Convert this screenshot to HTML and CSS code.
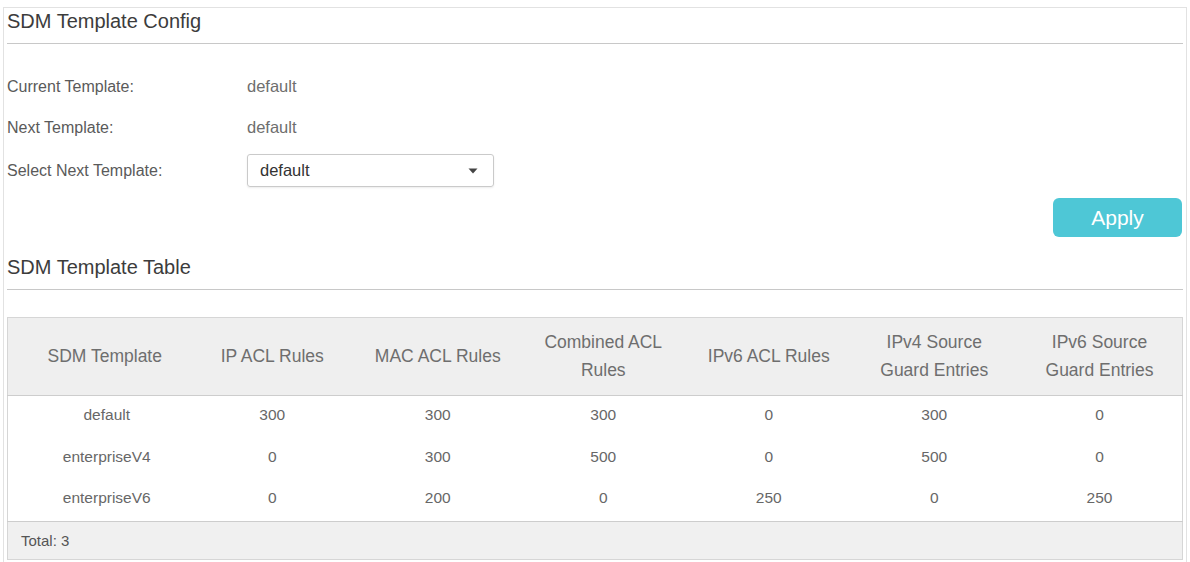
FILE: index.html
```html
<!DOCTYPE html>
<html lang="en">
<head>
    <meta charset="UTF-8">
    <meta name="viewport" content="width=device-width, initial-scale=1.0">
    <title>SDM Template Config</title>
    <link rel="stylesheet" href="styles.css">
</head>
<body>
    <div class="panel">
        <h2 class="section-title">SDM Template Config</h2>

        <div class="form">
            <div class="form-row">
                <span class="form-label">Current Template:</span>
                <span class="form-value">default</span>
            </div>
            <div class="form-row">
                <span class="form-label">Next Template:</span>
                <span class="form-value">default</span>
            </div>
            <div class="form-row form-row-select">
                <span class="form-label">Select Next Template:</span>
                <div class="select-box">
                    <span>default</span>
                    <svg class="select-arrow" width="10" height="6" viewBox="0 0 10 6">
                        <path d="M0.5 0.5 L9.5 0.5 L5 5.5 Z" fill="#444"/>
                    </svg>
                </div>
            </div>
        </div>

        <div class="apply-bar">
            <button class="btn-apply">Apply</button>
        </div>

        <h2 class="section-title section-title-table">SDM Template Table</h2>

        <table class="sdm-table">
            <colgroup>
                <col class="col-first">
                <col><col><col><col><col><col>
            </colgroup>
            <thead>
                <tr>
                    <th>SDM Template</th>
                    <th>IP ACL Rules</th>
                    <th>MAC ACL Rules</th>
                    <th>Combined ACL<br>Rules</th>
                    <th>IPv6 ACL Rules</th>
                    <th>IPv4 Source<br>Guard Entries</th>
                    <th>IPv6 Source<br>Guard Entries</th>
                </tr>
            </thead>
            <tbody>
                <tr>
                    <td>default</td><td>300</td><td>300</td><td>300</td><td>0</td><td>300</td><td>0</td>
                </tr>
                <tr>
                    <td>enterpriseV4</td><td>0</td><td>300</td><td>500</td><td>0</td><td>500</td><td>0</td>
                </tr>
                <tr>
                    <td>enterpriseV6</td><td>0</td><td>200</td><td>0</td><td>250</td><td>0</td><td>250</td>
                </tr>
            </tbody>
            <tfoot>
                <tr>
                    <td colspan="7">Total: 3</td>
                </tr>
            </tfoot>
        </table>
    </div>
</body>
</html>
```

FILE: styles.css
```css
* {
    box-sizing: border-box;
    margin: 0;
    padding: 0;
}

body {
    font-family: "Liberation Sans", Arial, sans-serif;
    background-color: #fff;
    color: #555;
}

.panel {
    width: 1184px;
    margin: 7px 0 0 3px;
    padding: 0 3px 20px 3px;
    border: 1px solid #e2e2e2;
}

.section-title {
    font-size: 20px;
    font-weight: normal;
    line-height: 26px;
    color: #3c3c3c;
    padding-bottom: 9px;
    border-bottom: 1px solid #c8c8c8;
}

.section-title-table {
    margin-top: 17px;
}

.form {
    padding-top: 22px;
}

.form-row {
    display: flex;
    align-items: center;
    height: 41px;
    font-size: 16px;
}

.form-row-select {
    height: 45px;
}

.form-label {
    width: 240px;
    color: #5a5a5a;
}

.form-value {
    font-size: 16.5px;
    color: #6e6e6e;
}

.select-box {
    width: 247px;
    height: 33px;
    display: flex;
    align-items: center;
    justify-content: space-between;
    padding: 0 15px 0 12px;
    border: 1px solid #cacaca;
    border-radius: 3px;
    box-shadow: 0 1px 2px rgba(0,0,0,0.08);
    font-size: 16.5px;
    color: #333;
}

.apply-bar {
    display: flex;
    justify-content: flex-end;
    margin-top: 5px;
    padding-right: 1px;
}

.btn-apply {
    width: 129px;
    height: 39px;
    border: none;
    border-radius: 6px;
    background-color: #4ec7d6;
    color: #fff;
    font-family: inherit;
    font-size: 21px;
    cursor: pointer;
}

.sdm-table {
    width: 100%;
    margin-top: 27px;
    border-collapse: collapse;
    table-layout: fixed;
    border: 1px solid #d6d6d6;
}

.col-first {
    width: 182px;
}

.sdm-table th {
    font-size: 17.5px;
    font-weight: normal;
    line-height: 28px;
    color: #6e6e6e;
    background-color: #efefef;
    padding: 10px 4px 11px;
    border-bottom: 1px solid #cdcdcd;
}

.sdm-table th:first-child,
.sdm-table tbody td:first-child {
    padding-left: 16px;
}

.sdm-table tbody td {
    height: 42px;
    padding-bottom: 4px;
    text-align: center;
    font-size: 15.5px;
    color: #676767;
}

.sdm-table tfoot td {
    height: 38px;
    padding-left: 13px;
    font-size: 15px;
    color: #555;
    background-color: #f0f0f0;
    border-top: 1px solid #cdcdcd;
}
```
